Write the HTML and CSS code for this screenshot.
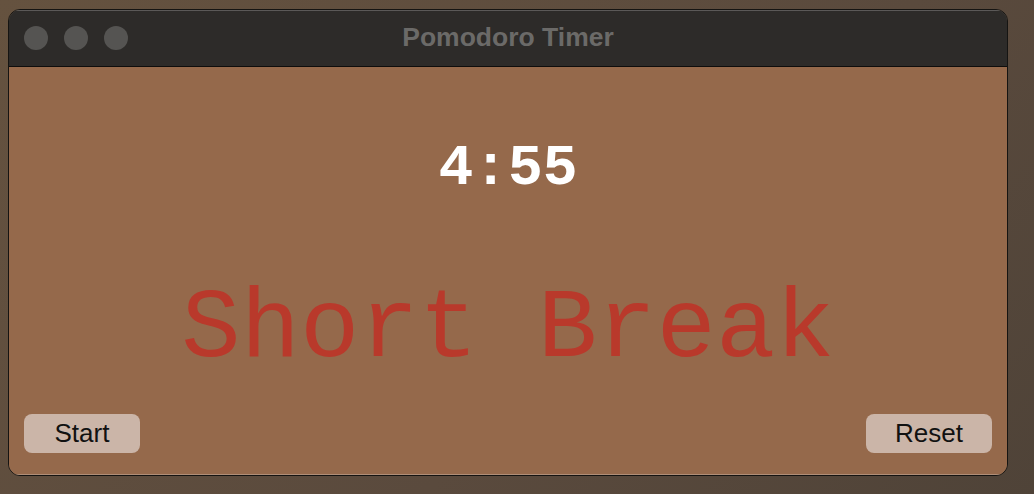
FILE: index.html
```html
<!DOCTYPE html>
<html>
<head>
<meta charset="utf-8">
<link rel="stylesheet" href="styles.css">
</head>
<body>
<div class="window">
  <div class="titlebar">
    <div class="lights">
      <span class="light"></span><span class="light"></span><span class="light"></span>
    </div>
    <div class="title">Pomodoro Timer</div>
  </div>
  <div class="content">
    <div class="timer">4:55</div>
    <div class="label">Short Break</div>
    <div class="buttons">
      <button class="btn start">Start</button>
      <button class="btn reset">Reset</button>
    </div>
  </div>
</div>
</body>
</html>
```
FILE: styles.css
```css
html, body {
  margin: 0;
  padding: 0;
}
body {
  width: 1034px;
  height: 494px;
  background: linear-gradient(135deg, #65523f 0%, #5a4a3d 60%, #4f4338 100%);
  font-family: "Liberation Sans", Arial, sans-serif;
  overflow: hidden;
}
.window {
  position: relative;
  margin: 9px 0 0 8px;
  width: 1000px;
  height: 467px;
  box-sizing: border-box;
  border: 1px solid #151412;
  border-radius: 12px;
  overflow: hidden;
  display: flex;
  flex-direction: column;
  box-shadow: inset 0 0 0 1px rgba(255,255,255,0.18);
}
.titlebar {
  height: 56px;
  flex: none;
  background: #2d2b29;
  border-bottom: 1px solid #0e0d0c;
  box-shadow: inset 0 1px 0 rgba(255,255,255,0.22);
  display: flex;
  align-items: center;
  position: relative;
}
.lights {
  display: flex;
  gap: 16px;
  padding-left: 15px;
}
.light {
  width: 24px;
  height: 24px;
  border-radius: 50%;
  background: #555452;
}
.title {
  position: absolute;
  left: 0;
  right: 0;
  top: 0;
  bottom: 0;
  display: flex;
  align-items: center;
  justify-content: center;
  color: #6b6a68;
  font-weight: bold;
  font-size: 26.5px;
  padding-bottom: 2px;
}
.content {
  flex: 1;
  background: #95694b;
  display: flex;
  flex-direction: column;
  align-items: center;
  box-shadow: inset 0 -1px 0 rgba(255,255,255,0.25);
}
.timer {
  margin-top: 69px;
  font-family: "Courier New", "Nimbus Mono PS", FreeMono, "Liberation Mono", monospace;
  font-weight: bold;
  font-size: 58px;
  line-height: 66px;
  color: #ffffff;
}
.label {
  margin-top: 73px;
  font-family: "Courier New", "Nimbus Mono PS", FreeMono, "Liberation Mono", monospace;
  font-size: 99px;
  line-height: 110px;
  color: #b9392b;
}
.buttons {
  margin-top: auto;
  align-self: stretch;
  display: flex;
  justify-content: space-between;
  padding: 0 15px 22px 15px;
}
.btn {
  height: 39px;
  border: none;
  border-radius: 8px;
  background: #cbb5a8;
  color: #111;
  font-family: "Liberation Sans", Arial, sans-serif;
  font-size: 26px;
  padding: 0;
}
.start { width: 116px; }
.reset { width: 126px; }
```
